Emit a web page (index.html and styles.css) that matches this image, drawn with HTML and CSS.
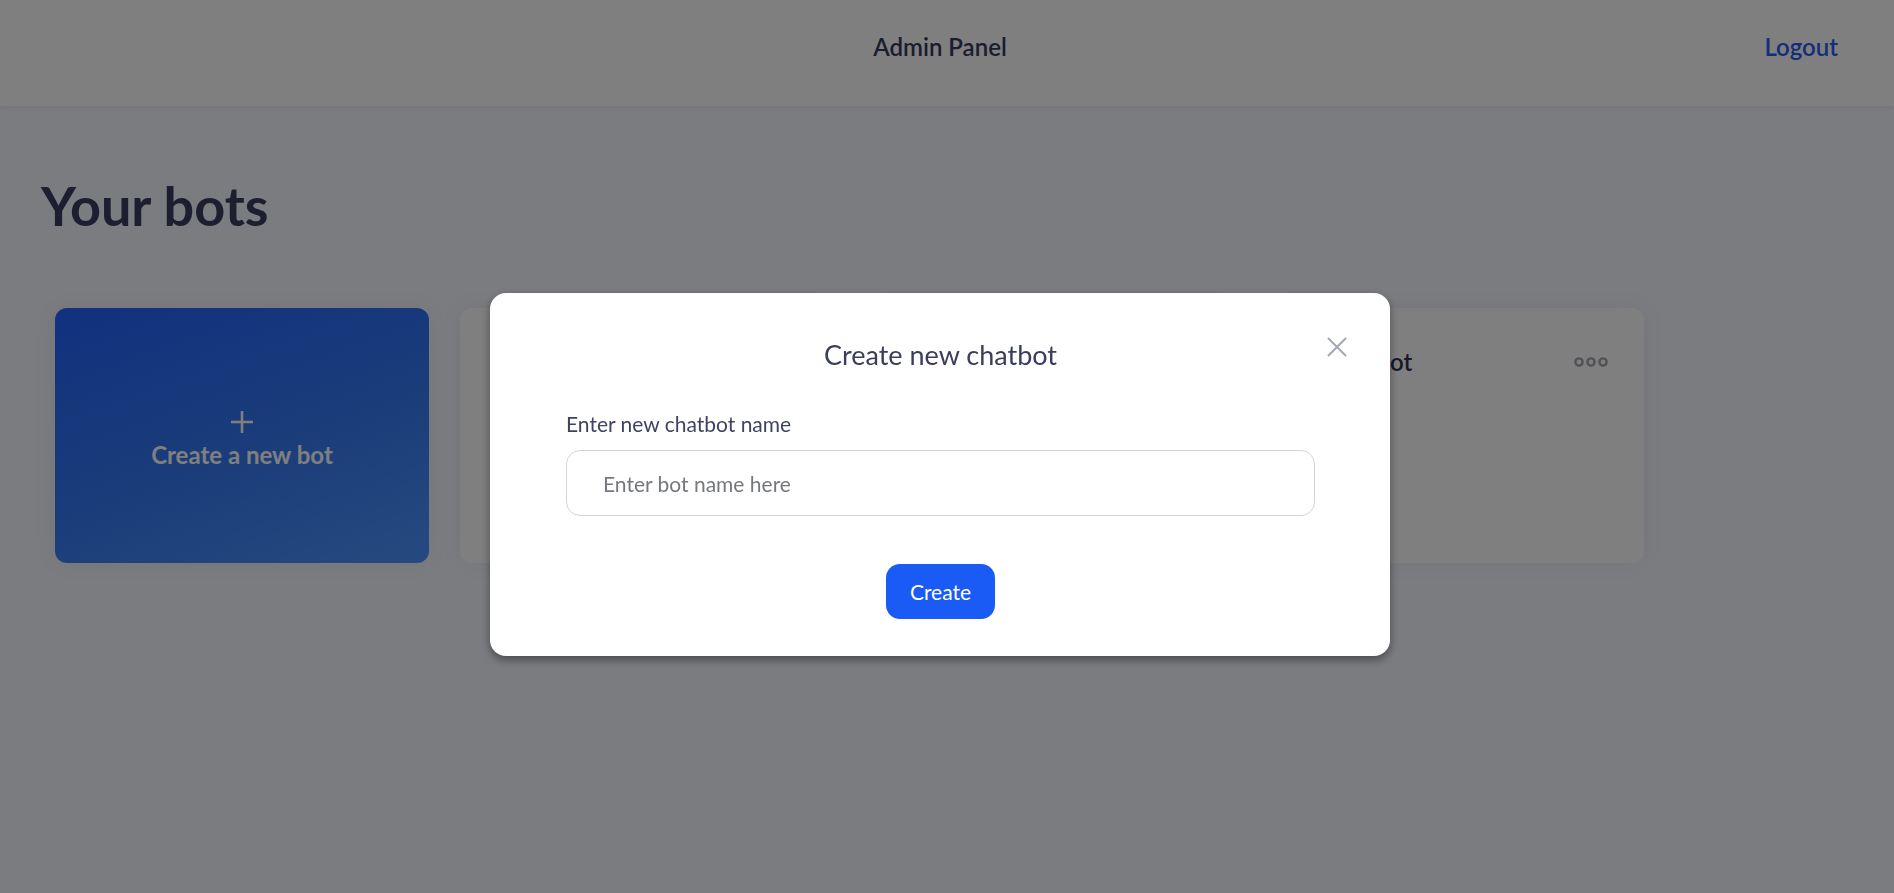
FILE: index.html
```html
<!DOCTYPE html>
<html lang="en">
<head>
  <meta charset="UTF-8" />
  <meta name="viewport" content="width=device-width, initial-scale=1" />
  <title>Admin Panel</title>
  <link rel="stylesheet" href="styles.css">
</head>
<body>
  <header class="topbar">
    <span></span>
    <div class="brand">Admin Panel</div>
    <a class="logout" href="#">Logout</a>
  </header>

  <main class="content">
    <h1>Your bots</h1>

    <div class="bot-grid">
      <div class="bot-card create-card">
        <svg class="plus" width="24" height="24" viewBox="0 0 24 24">
          <path d="M12 1v22M1 12h22" stroke="currentColor" stroke-width="2.6" fill="none" />
        </svg>
        <span>Create a new bot</span>
      </div>

      <div class="bot-card">
        <div class="bot-head">
          <span class="bot-name">Support bot</span>
          <svg class="dots" width="34" height="12" viewBox="0 0 34 12">
            <circle cx="5" cy="6" r="3.6" /><circle cx="17" cy="6" r="3.6" /><circle cx="29" cy="6" r="3.6" />
          </svg>
        </div>
      </div>

      <div class="bot-card">
        <div class="bot-head">
          <span class="bot-name">Sales bot</span>
          <svg class="dots" width="34" height="12" viewBox="0 0 34 12">
            <circle cx="5" cy="6" r="3.6" /><circle cx="17" cy="6" r="3.6" /><circle cx="29" cy="6" r="3.6" />
          </svg>
        </div>
      </div>

      <div class="bot-card">
        <div class="bot-head">
          <span class="bot-name">Demo bot</span>
          <svg class="dots" width="34" height="12" viewBox="0 0 34 12">
            <circle cx="5" cy="6" r="3.6" /><circle cx="17" cy="6" r="3.6" /><circle cx="29" cy="6" r="3.6" />
          </svg>
        </div>
      </div>
    </div>
  </main>

  <div class="overlay">
    <div class="modal">
      <button class="close-btn" aria-label="Close">
        <svg width="22" height="22" viewBox="0 0 22 22">
          <path d="M2 2l18 18M20 2L2 20" stroke="currentColor" stroke-width="2" fill="none" />
        </svg>
      </button>
      <h2 class="modal-title">Create new chatbot</h2>
      <label class="field-label" for="bot-name">Enter new chatbot name</label>
      <input id="bot-name" class="field-input" type="text" placeholder="Enter bot name here" />
      <div class="modal-actions">
        <button class="create-btn">Create</button>
      </div>
    </div>
  </div>
</body>
</html>
```

FILE: styles.css
```css
* { box-sizing: border-box; }
body {
  margin: 0;
  font-family: Lato, "Open Sans", sans-serif;
  background-color: #f6f8fe;
  color: #363a5c;
  min-height: 100vh;
}

.topbar {
  height: 106px;
  display: grid;
  grid-template-columns: 1fr auto 1fr;
  align-items: start;
  padding: 32px 56px 0 42px;
  background-color: #fff;
  box-shadow: 0 2px 4px rgba(0, 0, 0, 0.05);
}
.brand { font-size: 24px; font-weight: 600; line-height: 30px; color: #363a5c; }
.logout {
  justify-self: end;
  font-size: 24px;
  font-weight: 600;
  line-height: 30px;
  color: #2a5cf0;
  text-decoration: none;
}

.content { padding: 0 41px; }
.content h1 {
  margin: 68px 0 69px;
  font-size: 54px;
  font-weight: 700;
  line-height: 1.2;
  color: #3a3f62;
}

.bot-grid {
  display: grid;
  grid-template-columns: repeat(4, 374px);
  gap: 31px;
  padding-left: 14px;
}
.bot-card {
  height: 255px;
  border-radius: 12px;
  background-color: #fff;
  box-shadow: 0 0 24px rgba(0, 0, 0, 0.05);
  padding: 39px 36px;
}
.create-card {
  display: flex;
  flex-direction: column;
  align-items: center;
  justify-content: center;
  gap: 6px;
  padding: 8px 0 0;
  background: linear-gradient(160deg, #2362ff 0%, #3378f4 50%, #4c94ff 100%);
  color: #fff;
  font-size: 24px;
  font-weight: 700;
}
.bot-head { display: flex; justify-content: space-between; align-items: center; }
.bot-name { font-size: 24px; font-weight: 600; line-height: 30px; color: #2f3350; }
.dots { fill: none; stroke: #a2a3ac; stroke-width: 2.4; }

.overlay {
  position: fixed;
  inset: 0;
  background-color: rgba(0, 0, 0, 0.5);
  display: flex;
  justify-content: center;
  align-items: flex-start;
  padding: 293px 14px 0 0;
}
.modal {
  position: relative;
  width: 900px;
  background-color: #fff;
  border-radius: 16px;
  padding: 45px 75px 37px 76px;
  box-shadow: 0 4px 10px rgba(0, 0, 0, 0.4);
}
.close-btn {
  position: absolute;
  top: 43px;
  right: 42px;
  padding: 0;
  border: none;
  background: none;
  color: #a4a7b5;
  cursor: pointer;
  line-height: 0;
}
.modal-title {
  margin: 0 0 40px;
  text-align: center;
  font-size: 27px;
  font-weight: 400;
  line-height: 34px;
  color: #3a3e5c;
}
.field-label {
  display: block;
  font-size: 21px;
  line-height: 24px;
  color: #3f4363;
  margin-bottom: 14px;
}
.field-input {
  display: block;
  width: 100%;
  height: 66px;
  border: 1px solid #d3d4db;
  border-radius: 14px;
  padding: 0 36px;
  font-family: inherit;
  font-size: 21px;
  color: #363a5c;
  outline: none;
}
.field-input::placeholder { color: #76787f; }
.modal-actions { display: flex; justify-content: center; margin-top: 48px; }
.create-btn {
  height: 55px;
  padding: 0 24px;
  border: none;
  border-radius: 14px;
  background-color: #1a5af5;
  color: #fff;
  font-family: inherit;
  font-size: 21px;
  cursor: pointer;
}
```
